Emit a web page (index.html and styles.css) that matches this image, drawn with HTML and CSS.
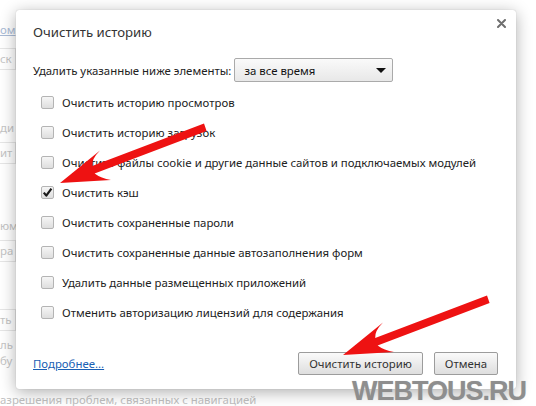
FILE: index.html
```html
<!DOCTYPE html>
<html lang="ru">
<head>
<meta charset="utf-8">
<title>Очистить историю</title>
<link rel="stylesheet" href="styles.css">
</head>
<body>
<div class="screen">
  <div class="settings">
    <div class="s-row s-link">ом</div>
    <div class="s-row s-btn">ск</div>
    <div class="s-row s-text">ди</div>
    <div class="s-row s-btn">ит</div>
    <div class="s-row s-text">юм</div>
    <div class="s-row s-btn">ра</div>
    <div class="s-row s-btn">ть</div>
    <div class="s-row s-text">ль</div>
    <div class="s-row s-text">бу</div>
    <div class="s-row s-bottom">азрешения проблем, связанных с навигацией</div>
  </div>

  <div class="dialog">
    <div class="dlg-head">
      <h1 class="dlg-title">Очистить историю</h1>
      <span class="dlg-close">
        <svg width="9" height="9" viewBox="0 0 9 9"><path d="M1 1L8 8M8 1L1 8" stroke="#6f6f6f" stroke-width="2" stroke-linecap="round"/></svg>
      </span>
    </div>

    <div class="range">
      <span class="range-label">Удалить указанные ниже элементы:</span>
      <div class="select">
        <span>за все время</span>
        <span class="caret"></span>
      </div>
    </div>

    <ul class="options">
      <li class="option"><span class="box"></span>Очистить историю просмотров</li>
      <li class="option"><span class="box"></span>Очистить историю загрузок</li>
      <li class="option"><span class="box"></span>Очистить файлы cookie и другие данные сайтов и подключаемых модулей</li>
      <li class="option"><span class="box checked"><svg width="11" height="11" viewBox="0 0 11 11"><path d="M1.8 5.6L4.3 8.6L9.4 1.6" fill="none" stroke="#1a1a1a" stroke-width="2.2" stroke-linejoin="round"/></svg></span>Очистить кэш</li>
      <li class="option"><span class="box"></span>Очистить сохраненные пароли</li>
      <li class="option"><span class="box"></span>Очистить сохраненные данные автозаполнения форм</li>
      <li class="option"><span class="box"></span>Удалить данные размещенных приложений</li>
      <li class="option"><span class="box"></span>Отменить авторизацию лицензий для содержания</li>
    </ul>

    <div class="dlg-foot">
      <a class="more" href="#">Подробнее...</a>
      <div class="buttons">
        <button class="btn btn-main">Очистить историю</button>
        <button class="btn btn-cancel">Отмена</button>
      </div>
    </div>
  </div>

  <svg class="arrows" width="536" height="406" viewBox="0 0 536 406">
    <defs>
      <path id="arrow" d="M0 0 L40 -32.5 Q31.5 -24 32.2 -17 L144 -59.5 L146.6 -52 L34.6 -9.4 Q41 -4.5 51 -3 Z"/>
    </defs>
    <use href="#arrow" x="60" y="183" fill="#ee1212"/>
    <use href="#arrow" x="343" y="355" fill="#ee1212"/>
  </svg>

  <div class="watermark">WEBTOUS.RU</div>
</div>
</body>
</html>
```
FILE: styles.css
```css
* {
  box-sizing: border-box;
}

html, body {
  margin: 0;
  padding: 0;
  background: #ffffff;
}

.screen {
  position: relative;
  width: 536px;
  height: 406px;
  overflow: hidden;
  font-family: "Noto Sans", "Open Sans", sans-serif;
  color: #333;
}

/* settings page dimmed behind the modal */
.settings {
  display: flex;
  flex-direction: column;
  padding-top: 20px;
  color: #c4c4c4;
  font-size: 11.4px;
}

.s-row {
  width: 16px;
  height: 20px;
  line-height: 20px;
  white-space: nowrap;
}

.s-link {
  color: #aabbd6;
  text-decoration: underline;
}

.s-btn {
  border: 1px solid #e6e6e6;
  border-left: none;
  height: 22px;
}

.s-bottom {
  width: auto;
  color: #c0c0c0;
}

.settings .s-row:nth-child(2) { margin-top: 8px; }
.settings .s-row:nth-child(3) { margin-top: 48px; }
.settings .s-row:nth-child(4) { margin-top: 4px; }
.settings .s-row:nth-child(5) { margin-top: 52px; }
.settings .s-row:nth-child(6) { margin-top: 4px; }
.settings .s-row:nth-child(7) { margin-top: 47px; }
.settings .s-row:nth-child(8) { margin-top: 4px; }
.settings .s-row:nth-child(9) { margin-top: -4px; }
.settings .s-row:nth-child(10) { margin-top: 19px; }

/* modal */
.dialog {
  position: absolute;
  left: 16px;
  top: 10px;
  width: 500px;
  height: 379px;
  background: #fff;
  border-radius: 3px;
  box-shadow: 0 3px 16px rgba(0, 0, 0, 0.32), 0 0 1px rgba(0, 0, 0, 0.25);
  padding: 12px 18px 0 17px;
  display: flex;
  flex-direction: column;
}

.dlg-head {
  display: flex;
  justify-content: space-between;
  align-items: flex-start;
  height: 20px;
}

.dlg-title {
  margin: 0;
  font-size: 13.2px;
  font-weight: normal;
  line-height: 20px;
  color: #333;
}

.dlg-close {
  display: flex;
  margin-top: -3px;
  margin-right: -8px;
}

.range {
  display: flex;
  align-items: center;
  margin-top: 16px;
  height: 24px;
  font-size: 11.4px;
  color: #222;
}

.range-label {
  margin-right: 3px;
}

.select {
  width: 159px;
  height: 24px;
  border: 1px solid #aaa;
  border-radius: 2px;
  background: linear-gradient(#fafafa, #e8e8e8);
  display: flex;
  align-items: center;
  justify-content: space-between;
  padding: 0 6px 0 9px;
  color: #111;
}

.caret {
  width: 0;
  height: 0;
  border-left: 5px solid transparent;
  border-right: 5px solid transparent;
  border-top: 5px solid #111;
}

.options {
  list-style: none;
  margin: 5px 0 0;
  padding: 0 0 0 8px;
}

.option {
  display: flex;
  align-items: center;
  height: 30px;
  font-size: 11.4px;
  color: #222;
  white-space: nowrap;
}

.box {
  width: 13px;
  height: 13px;
  margin-right: 8px;
  border: 1px solid #b4b4b4;
  border-radius: 2px;
  background: linear-gradient(#f6f6f6, #dedede);
  display: flex;
  align-items: center;
  justify-content: center;
  flex: none;
}

.dlg-foot {
  display: flex;
  align-items: center;
  justify-content: space-between;
  margin-top: 25px;
}

.more {
  font-size: 11.4px;
  color: #1a5fb4;
  text-decoration: underline;
}

.buttons {
  display: flex;
  gap: 11px;
}

.btn {
  height: 23px;
  border: 1px solid #9c9c9c;
  border-radius: 2px;
  background: linear-gradient(#fafafa, #dedede);
  font-family: "Noto Sans", "Open Sans", sans-serif;
  font-size: 11.4px;
  color: #333;
  padding: 0;
}

.btn-main {
  width: 125px;
}

.btn-cancel {
  width: 64px;
}

/* annotation overlay */
.arrows {
  position: absolute;
  left: 0;
  top: 0;
}

.watermark {
  position: absolute;
  left: 352px;
  top: 374px;
  font-family: "Liberation Sans", Arial, sans-serif;
  font-weight: bold;
  font-size: 27px;
  letter-spacing: -1px;
  line-height: 34px;
  color: #8e8e8e;
  text-shadow: 0 0 1px #c8c8c8;
}
```
